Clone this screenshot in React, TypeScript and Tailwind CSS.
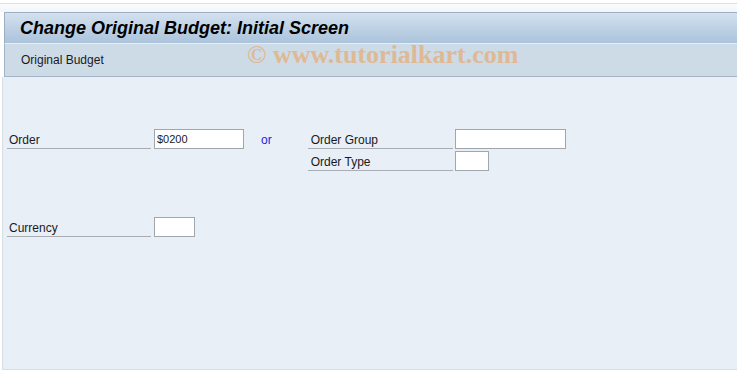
export default function App() {
  const font = { fontFamily: '"Liberation Sans", Arial, sans-serif' };
  return (
    <div className="w-[737px] h-[370px] bg-white overflow-hidden flex flex-col" style={font}>
      <div className="h-[3px] bg-white" />
      <div className="h-[1px] bg-[#dcdfe3]" />
      <div className="h-[8px] bg-gradient-to-b from-[#fbfcfe] to-[#f2f5fa]" />
      <div className="ml-[4px] border-l border-t border-[#9caec4] h-[31px] bg-gradient-to-b from-[#d3e1ef] to-[#abc3db] flex items-center pl-[15px]">
        <span className="text-[18px] font-bold italic text-black">Change Original Budget: Initial Screen</span>
      </div>
      <div className="relative ml-[4px] border-l border-b border-[#a2b3c7] h-[34px] bg-[#cddbe7] border-t border-t-[#e6edf5] flex items-center pl-[16px]">
        <span className="text-[12px] text-[#1a1a1a]">Original Budget</span>
        <span className="absolute left-[242px] top-[-9px] text-[26px] font-bold text-[#eaa868] opacity-65" style={{ fontFamily: '"Liberation Serif", "Times New Roman", serif' }}>
          © www.tutorialkart.com
        </span>
      </div>
      <div className="flex-1 ml-[2px] border-l border-b border-[#d9dee4] bg-[#e8eff7] pt-[52px] text-[12px] text-[#1a1a1a]">
        <div className="flex">
          <div className="flex h-[20px]">
            <div className="ml-[4px] w-[144px] border-b border-[#a8adb3] pl-[2px] pt-[2px] flex items-center">Order</div>
            <div className="ml-[3px] w-[90px] bg-white border border-[#a0a6ad] flex items-center pl-[2px] text-[11px]">$0200</div>
          </div>
          <div className="ml-[17px] h-[20px] pt-[2px] flex items-center text-[#2323d8]">or</div>
          <div className="ml-[36px] flex flex-col gap-[2px]">
            <div className="flex h-[20px]">
              <div className="w-[145px] border-b border-[#a8adb3] pl-[3px] pt-[2px] flex items-center">Order Group</div>
              <div className="ml-[2px] w-[111px] bg-white border border-[#a0a6ad]" />
            </div>
            <div className="flex h-[20px]">
              <div className="w-[145px] border-b border-[#a8adb3] pl-[3px] pt-[2px] flex items-center">Order Type</div>
              <div className="ml-[2px] w-[34px] bg-white border border-[#a0a6ad]" />
            </div>
          </div>
        </div>
        <div className="flex h-[20px] mt-[46px]">
          <div className="ml-[4px] w-[144px] border-b border-[#a8adb3] pl-[2px] pt-[2px] flex items-center">Currency</div>
          <div className="ml-[3px] w-[41px] bg-white border border-[#a0a6ad]" />
        </div>
      </div>
    </div>
  );
}
